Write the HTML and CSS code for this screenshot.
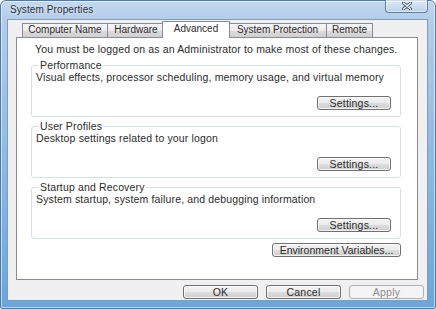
FILE: index.html
```html
<!DOCTYPE html>
<html lang="en">
<head>
    <meta charset="UTF-8">
    <title>System Properties</title>
    <link rel="stylesheet" href="styles.css">
</head>
<body>
    <div class="window">
        <div class="titlebar">
            <span class="title">System Properties</span>
            <div class="close">
                <svg width="10" height="8" viewBox="0 0 10 8">
                    <path d="M1.5 1 L8.5 7 M8.5 1 L1.5 7" stroke="#3c4f66" stroke-width="3" stroke-linecap="round"/>
                    <path d="M1.5 1 L8.5 7 M8.5 1 L1.5 7" stroke="#ffffff" stroke-width="1.4" stroke-linecap="round"/>
                </svg>
            </div>
        </div>
        <div class="client">
            <div class="tabs">
                <div class="tab tab-cn">Computer Name</div>
                <div class="tab tab-hw">Hardware</div>
                <div class="tab tab-adv selected">Advanced</div>
                <div class="tab tab-sp">System Protection</div>
                <div class="tab tab-rm">Remote</div>
            </div>
            <div class="panel">
                <p class="note">You must be logged on as an Administrator to make most of these changes.</p>

                <fieldset class="group">
                    <legend>Performance</legend>
                    <p class="desc">Visual effects, processor scheduling, memory usage, and virtual memory</p>
                    <div class="group-actions"><button class="btn settings">Settings...</button></div>
                </fieldset>

                <fieldset class="group">
                    <legend>User Profiles</legend>
                    <p class="desc">Desktop settings related to your logon</p>
                    <div class="group-actions"><button class="btn settings">Settings...</button></div>
                </fieldset>

                <fieldset class="group">
                    <legend>Startup and Recovery</legend>
                    <p class="desc">System startup, system failure, and debugging information</p>
                    <div class="group-actions"><button class="btn settings">Settings...</button></div>
                </fieldset>

                <div class="env-row"><button class="btn env">Environment Variables...</button></div>
            </div>
            <div class="actions">
                <button class="btn dlg">OK</button>
                <button class="btn dlg">Cancel</button>
                <button class="btn dlg" disabled>Apply</button>
            </div>
        </div>
    </div>
</body>
</html>
```

FILE: styles.css
```css
body, html {
    margin: 0;
    padding: 0;
    background-color: #ffffff;
}
body {
    font-family: "Liberation Sans", Arial, sans-serif;
    font-size: 10px;
    color: #2b2b2b;
}
.window {
    width: 436px;
    height: 309px;
    box-sizing: border-box;
    display: flex;
    flex-direction: column;
    background: linear-gradient(180deg, #c2d8ee 0, #b3cdea 18px, #84b6e4 60%, #6aa6dc 100%);
    border: 1px solid #4d7aa6;
    border-radius: 6px 6px 2px 2px;
    padding: 0 7px 7px 6px;
    box-shadow: inset 0 0 0 1px rgba(255, 255, 255, 0.55);
}
.titlebar {
    height: 18px;
    display: flex;
    align-items: flex-start;
    justify-content: space-between;
}
.title {
    margin: 3px 0 0 3px;
    font-size: 10px;
    line-height: 12px;
    letter-spacing: 0.1px;
    color: #2a2f38;
    text-shadow: 0 0 4px rgba(255, 255, 255, 0.9);
}
.close {
    width: 43px;
    height: 13px;
    margin-top: -1px;
    box-sizing: border-box;
    border: 1px solid #5d7e9f;
    border-top: none;
    border-radius: 0 0 4px 4px;
    background: linear-gradient(180deg, rgba(255, 255, 255, 0.45), rgba(190, 215, 240, 0.3));
    box-shadow: inset 0 0 0 1px rgba(255, 255, 255, 0.5);
    display: flex;
    align-items: center;
    justify-content: center;
}
.client {
    flex: 1;
    background-color: #f0f0f0;
    border: 1px solid #7f9db9;
    padding: 1px 9px 0 8px;
    display: flex;
    flex-direction: column;
}
.tabs {
    display: flex;
    align-items: flex-end;
    height: 17px;
    margin-bottom: -1px;
    padding-left: 6px;
    position: relative;
    z-index: 1;
}
.tab {
    box-sizing: border-box;
    height: 14px;
    line-height: 12px;
    text-align: center;
    border: 1px solid #898c95;
    border-bottom: none;
    background: linear-gradient(180deg, #f6f6f6 0, #ebebeb 50%, #dddddd 51%, #cfcfcf 100%);
    margin-left: -1px;
    margin-bottom: 1px;
    white-space: nowrap;
}
.tab:first-child {
    margin-left: 0;
}
.tab-cn { width: 86px; }
.tab-hw { width: 58px; }
.tab-adv { width: 68px; }
.tab-sp { width: 99px; }
.tab-rm { width: 47px; }
.tab.selected {
    height: 17px;
    margin: 0 -2px 0 -3px;
    background: #ffffff;
    position: relative;
    z-index: 2;
    line-height: 14px;
}
.tab-adv + .tab {
    margin-left: 0;
}
.panel {
    height: 243px;
    box-sizing: border-box;
    background-color: #ffffff;
    border: 1px solid #898c95;
    padding: 5px 16px 0 14px;
    font-size: 10.5px;
    letter-spacing: 0.15px;
}
.note {
    margin: 0 0 4px 4px;
    line-height: 12px;
}
.group {
    margin: 0 0 3px 0;
    padding: 0 9px 6px 4px;
    height: 58px;
    box-sizing: border-box;
    border: 1px solid #d5dfe5;
    border-radius: 3px;
    min-width: 0;
}
.group legend {
    padding: 0 1px;
    margin-left: 3px;
    line-height: 12px;
}
.desc {
    margin: 0;
    line-height: 12px;
}
.group-actions {
    display: flex;
    justify-content: flex-end;
    margin-top: 13px;
}
.btn {
    box-sizing: border-box;
    height: 14px;
    padding: 0;
    font-family: "Liberation Sans", Arial, sans-serif;
    font-size: 10.5px;
    letter-spacing: 0.2px;
    line-height: 12px;
    color: #2b2b2b;
    border: 1px solid #707070;
    border-radius: 3px;
    background: linear-gradient(180deg, #f3f3f3 0, #ebebeb 50%, #dddddd 51%, #cfcfcf 100%);
    box-shadow: inset 0 0 0 1px rgba(255, 255, 255, 0.7);
}
.settings {
    width: 74px;
}
.env-row {
    display: flex;
    justify-content: flex-end;
    margin-top: 4px;
}
.env {
    width: 129px;
    letter-spacing: 0;
}
.actions {
    display: flex;
    justify-content: flex-end;
    gap: 8px;
    margin: 5px -6px 0 0;
}
.dlg {
    width: 75px;
}
.dlg:disabled {
    color: #8d8d8d;
    border-color: #adb2b5;
    background: #f4f4f4;
    box-shadow: none;
}
```
